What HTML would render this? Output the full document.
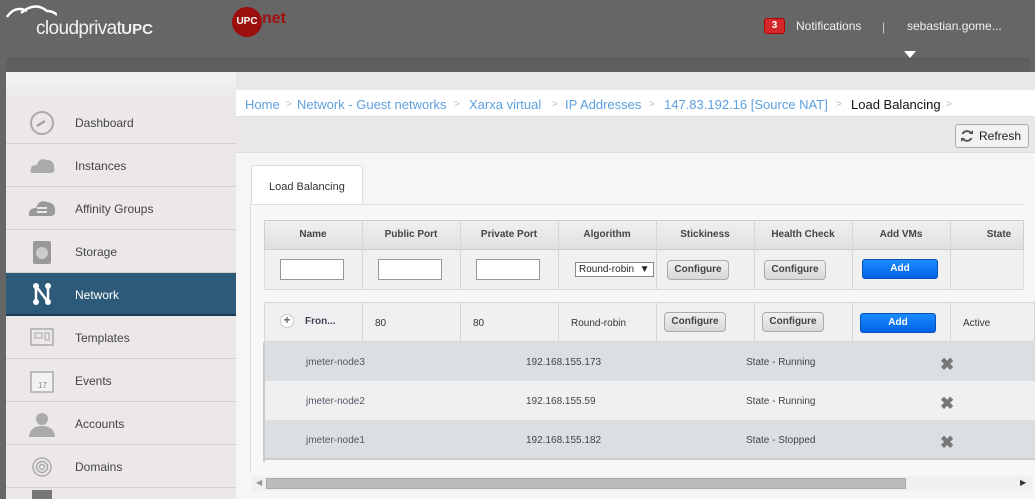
<!DOCTYPE html>
<html><head><meta charset="utf-8"><style>
*{box-sizing:border-box;margin:0;padding:0}
body{width:1035px;height:499px;overflow:hidden;background:#666;font-family:"Liberation Sans",sans-serif;position:relative}
.a{position:absolute}
.side{left:6px;top:72px;width:230px;height:427px;background:#ebe8e7}
.item{position:absolute;left:0;width:230px;height:43px;border-bottom:1px solid #d3d1d0;font-size:12px;color:#444}
.item span{position:absolute;left:69px;top:15px}
.item .ic{position:absolute;left:22px;top:9px;width:28px;height:26px}
.main{left:236px;top:72px;width:799px;height:427px;background:#eae8e7}
.col{position:absolute;border-right:1px solid #d6d6d6}
.btn{position:absolute;width:62px;height:20px;border:1px solid #aaa;border-radius:4px;background:linear-gradient(#f0f0f0,#d8d8d8);font-size:10px;font-weight:bold;color:#444;text-align:center;line-height:18px}
.add{position:absolute;width:76px;height:20px;border:1px solid #0a52b8;border-radius:3px;background:linear-gradient(#1a8cff,#0062e6);color:#fff;font-size:10px;font-weight:bold;text-align:center;line-height:18px}
.inp{position:absolute;width:64px;height:21px;background:#fff;border:1px solid #999}
.h{position:absolute;top:229px;font-size:10px;font-weight:bold;color:#444;text-align:center;width:98px}
.sub{position:absolute;left:264px;width:771px;height:39px;font-size:10px;color:#444}
.x{position:absolute;left:940px;font-size:17px;color:#777;font-weight:bold}
.bc{position:absolute;top:97px;font-size:13px;color:#5ea0e0;white-space:nowrap}
.gt{position:absolute;top:99px;font-size:10px;color:#bbb}
</style></head><body>
<!-- header -->
<svg class="a" style="left:5px;top:3px" width="52" height="20"><path d="M2 14 Q10 2 22 8 M16 10 Q30 -2 42 8 Q48 8 52 12" stroke="#fff" stroke-width="2.4" fill="none"/></svg>
<div class="a" style="left:36px;top:18px;font-size:19px;color:#f2f2f2;letter-spacing:-0.6px;font-weight:normal">cloudprivat<span style="font-size:15px;letter-spacing:0;font-weight:bold">UPC</span></div>
<div class="a" style="left:232px;top:7px;width:30px;height:30px;border-radius:50%;background:#9a0e0e;color:#fff;font-size:10px;font-weight:bold;line-height:30px;text-align:center">UPC</div>
<div class="a" style="left:262px;top:10px;font-size:16px;color:#a01010;font-weight:bold">net</div>
<div class="a" style="left:764px;top:18px;width:21px;height:16px;background:#d4282a;border:1px solid #a00;border-radius:3px;color:#fff;font-size:10px;font-weight:bold;text-align:center;line-height:14px">3</div>
<div class="a" style="left:796px;top:19px;font-size:12px;color:#f0f0f0">Notifications</div>
<div class="a" style="left:882px;top:20px;font-size:12px;color:#ccc">|</div>
<div class="a" style="left:907px;top:19px;font-size:12px;color:#f0f0f0">sebastian.gome...</div>
<div class="a" style="left:904px;top:51px;width:0;height:0;border-left:6px solid transparent;border-right:6px solid transparent;border-top:7px solid #fff"></div>
<div class="a" style="left:6px;top:58px;width:1024px;height:16px;background:#5f5f5f;border-radius:5px 5px 0 0;border-top:1px solid #4a5a66"></div>
<!-- sidebar -->
<div class="a side">
 <div style="position:absolute;left:0;top:0;width:230px;height:29px;background:linear-gradient(#f5f4f4,#ebe8e7)"></div>
 <div class="item" style="top:29px"><svg class="ic" viewBox="0 0 28 26"><circle cx="14" cy="13" r="11" fill="none" stroke="#aaa" stroke-width="2"/><path d="M9 16 L17 11" stroke="#999" stroke-width="2"/></svg><span>Dashboard</span></div>
 <div class="item" style="top:72px"><svg class="ic" viewBox="0 0 28 26"><path d="M3 20 Q1 12 9 12 Q11 4 19 7 Q26 7 26 14 Q28 20 22 20Z" fill="#aaa"/></svg><span>Instances</span></div>
 <div class="item" style="top:115px"><svg class="ic" viewBox="0 0 28 26"><path d="M1 20 Q0 12 8 12 Q11 3 19 6 Q27 7 27 14 Q28 20 22 20Z" fill="#999"/><path d="M9 12h10M9 16h10" stroke="#fff" stroke-width="1.5"/></svg><span>Affinity Groups</span></div>
 <div class="item" style="top:158px"><svg class="ic" viewBox="0 0 28 26"><rect x="5" y="2" width="18" height="23" rx="2" fill="#999"/><circle cx="14" cy="14" r="6" fill="#ccc"/></svg><span>Storage</span></div>
 <div class="item" style="top:201px;background:#2c5a78;border-bottom:2px solid #1a3a50;color:#fff"><svg class="ic" viewBox="0 0 28 26"><path d="M8 4V20M8 4L20 20M20 4V20" stroke="#fff" stroke-width="2.5"/><circle cx="8" cy="4" r="3" fill="#fff"/><circle cx="20" cy="4" r="3" fill="#fff"/><circle cx="8" cy="20" r="3" fill="#fff"/><circle cx="20" cy="20" r="3" fill="#fff"/></svg><span>Network</span></div>
 <div class="item" style="top:244px"><svg class="ic" viewBox="0 0 28 26"><rect x="3" y="4" width="22" height="16" fill="none" stroke="#aaa" stroke-width="1.5"/><rect x="7" y="8" width="7" height="5" fill="none" stroke="#aaa"/><rect x="17" y="8" width="4" height="7" fill="none" stroke="#aaa"/></svg><span>Templates</span></div>
 <div class="item" style="top:287px"><svg class="ic" viewBox="0 0 28 26"><rect x="3" y="4" width="22" height="20" fill="#f2f2f2" stroke="#aaa" stroke-width="1.5"/><text x="10" y="20" font-size="8" fill="#888">17</text></svg><span>Events</span></div>
 <div class="item" style="top:330px"><svg class="ic" viewBox="0 0 28 26"><circle cx="14" cy="8" r="6" fill="#aaa"/><path d="M1 26Q2 15 14 15Q26 15 27 26Z" fill="#aaa"/></svg><span>Accounts</span></div>
 <div class="item" style="top:373px"><svg class="ic" viewBox="0 0 28 26"><circle cx="14" cy="13" r="9" fill="none" stroke="#aaa" stroke-width="1.5"/><circle cx="14" cy="13" r="5.5" fill="none" stroke="#aaa" stroke-width="1.5"/><circle cx="14" cy="13" r="2.5" fill="none" stroke="#aaa" stroke-width="1.5"/></svg><span>Domains</span></div>
 <div class="a" style="left:26px;top:418px;width:20px;height:9px;background:#777"></div>
</div>
<!-- main -->
<div class="a main"></div>
<div class="a" style="left:236px;top:90px;width:799px;height:27px;background:#fff;border-bottom:1px solid #ddd"></div>
<span class="bc" style="left:245px">Home</span><span class="gt" style="left:286px">&gt;</span>
<span class="bc" style="left:297px">Network - Guest networks</span><span class="gt" style="left:454px">&gt;</span>
<span class="bc" style="left:469px">Xarxa virtual</span><span class="gt" style="left:552px">&gt;</span>
<span class="bc" style="left:565px">IP Addresses</span><span class="gt" style="left:649px">&gt;</span>
<span class="bc" style="left:664px">147.83.192.16 [Source NAT]</span><span class="gt" style="left:836px">&gt;</span>
<span class="bc" style="left:851px;color:#111">Load Balancing</span><span class="gt" style="left:946px">&gt;</span>
<div class="a" style="left:955px;top:124px;width:74px;height:24px;border:1px solid #aaa;border-radius:3px;background:#f2f2f2;font-size:12px;color:#222;padding:4px 0 0 23px">Refresh</div>
<svg class="a" style="left:960px;top:129px" width="14" height="14" viewBox="0 0 14 14"><path d="M11.5 5A5 5 0 0 0 2.5 5M2.5 9A5 5 0 0 0 11.5 9" stroke="#555" stroke-width="2" fill="none"/><path d="M9 5h4V1zM5 9H1v4z" fill="#555"/></svg>
<div class="a" style="left:236px;top:152px;width:799px;height:347px;background:#f6f6f6;border-top:1px solid #ddd"></div>
<div class="a" style="left:251px;top:165px;width:112px;height:40px;background:#fff;border:1px solid #ddd;border-bottom:none;border-radius:3px 3px 0 0;font-size:11px;color:#333;padding:15px 0 0 17px">Load Balancing</div>
<div class="a" style="left:250px;top:204px;width:774px;height:268px;border-top:1px solid #ddd;border-left:1px solid #ddd;background:#f7f7f7"></div>
<!-- header row -->
<div class="a" style="left:264px;top:220px;width:760px;height:30px;background:linear-gradient(#f0f0f0,#e0e0e0);border:1px solid #ccc"></div>
<div class="a" style="left:264px;top:250px;width:760px;height:40px;background:#f0f0f0;border:1px solid #ddd;border-top:none"></div>
<div class="h" style="left:264px">Name</div><div class="h" style="left:362px">Public Port</div><div class="h" style="left:460px">Private Port</div><div class="h" style="left:558px">Algorithm</div><div class="h" style="left:656px">Stickiness</div><div class="h" style="left:754px">Health Check</div><div class="h" style="left:852px">Add VMs</div><div class="h" style="left:950px;width:98px">State</div>
<div class="col" style="left:362px;top:220px;height:70px"></div><div class="col" style="left:460px;top:220px;height:70px"></div><div class="col" style="left:558px;top:220px;height:70px"></div><div class="col" style="left:656px;top:220px;height:70px"></div><div class="col" style="left:754px;top:220px;height:70px"></div><div class="col" style="left:852px;top:220px;height:70px"></div><div class="col" style="left:950px;top:220px;height:70px"></div>
<div class="inp" style="left:280px;top:259px"></div><div class="inp" style="left:378px;top:259px"></div><div class="inp" style="left:476px;top:259px"></div>
<div class="a" style="left:575px;top:262px;width:79px;height:15px;border:1px solid #888;background:#fff;font-size:10px;padding:1px 3px;color:#222">Round-robin &nbsp;▼</div>
<div class="btn" style="left:667px;top:260px">Configure</div><div class="btn" style="left:764px;top:260px">Configure</div><div class="add" style="left:862px;top:259px">Add</div>
<!-- data row -->
<div class="a" style="left:264px;top:302px;width:771px;height:40px;background:#eff0f2;border:1px solid #d6d6d6"></div>
<div class="col" style="left:362px;top:302px;height:40px"></div><div class="col" style="left:460px;top:302px;height:40px"></div><div class="col" style="left:558px;top:302px;height:40px"></div><div class="col" style="left:656px;top:302px;height:40px"></div><div class="col" style="left:754px;top:302px;height:40px"></div><div class="col" style="left:852px;top:302px;height:40px"></div><div class="col" style="left:950px;top:302px;height:40px"></div>
<div class="a" style="left:280px;top:314px;width:14px;height:14px;border-radius:50%;background:#fff;border:1px solid #ccc;font-size:12px;line-height:11px;text-align:center;color:#666;font-weight:bold">+</div>
<div class="a" style="left:305px;top:316px;font-size:10px;font-weight:bold;color:#445">Fron...</div>
<div class="a" style="left:375px;top:318px;font-size:10px;color:#333">80</div>
<div class="a" style="left:473px;top:318px;font-size:10px;color:#333">80</div>
<div class="a" style="left:571px;top:318px;font-size:10px;color:#333">Round-robin</div>
<div class="btn" style="left:664px;top:312px">Configure</div><div class="btn" style="left:762px;top:312px">Configure</div><div class="add" style="left:860px;top:313px">Add</div>
<div class="a" style="left:963px;top:318px;font-size:10px;color:#333">Active</div>
<!-- subrows -->
<div class="sub" style="top:342px;background:#dcdfe2"><span class="a" style="left:42px;top:15px;color:#556">jmeter-node3</span><span class="a" style="left:262px;top:15px">192.168.155.173</span><span class="a" style="left:482px;top:15px">State - Running</span></div>
<div class="sub" style="top:381px;background:#f1f0f1"><span class="a" style="left:42px;top:15px;color:#556">jmeter-node2</span><span class="a" style="left:262px;top:15px">192.168.155.59</span><span class="a" style="left:482px;top:15px">State - Running</span></div>
<div class="sub" style="top:420px;height:40px;background:#dcdfe2;border-bottom:2px solid #ccc"><span class="a" style="left:42px;top:15px;color:#556">jmeter-node1</span><span class="a" style="left:262px;top:15px">192.168.155.182</span><span class="a" style="left:482px;top:15px">State - Stopped</span></div>
<div class="a" style="left:263px;top:342px;width:2px;height:120px;background:#ccc"></div>
<div class="x" style="top:355px">✖</div><div class="x" style="top:394px">✖</div><div class="x" style="top:433px">✖</div>
<!-- scrollbar -->
<div class="a" style="left:252px;top:476px;width:780px;height:15px;background:#f0f0f0"></div>
<div class="a" style="left:266px;top:478px;width:640px;height:11px;background:#bbb;border:1px solid #aaa"></div>
<div class="a" style="left:256px;top:478px;font-size:8px;color:#999">◀</div>
<div class="a" style="left:1020px;top:478px;font-size:8px;color:#333">▶</div>
</body></html>
